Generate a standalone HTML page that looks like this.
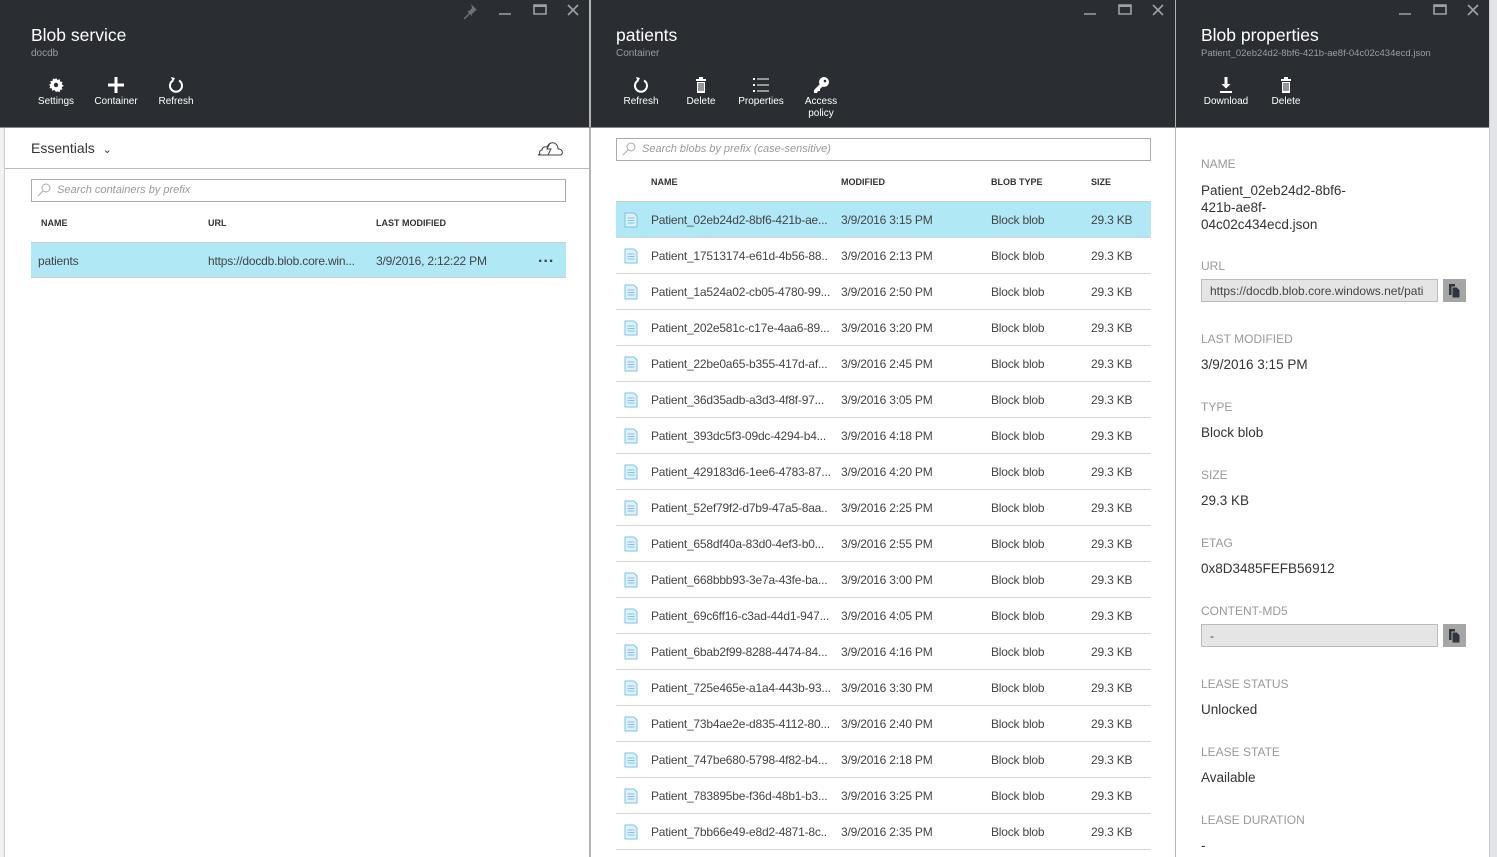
<!DOCTYPE html>
<html><head><meta charset="utf-8"><style>
*{margin:0;padding:0;box-sizing:border-box}
body{width:1497px;height:857px;overflow:hidden;background:#fff;font-family:"Liberation Sans",sans-serif;position:relative;color:#333}
.a{position:absolute}
.hdr{background:#2a2e33;height:127px;top:0}
.t{color:#fff;font-size:17.5px;top:25px}
.st{color:#9a9ea3;font-size:10px;top:48px}
.btn{color:#fff;font-size:10px;text-align:center;top:77px;width:60px;line-height:12px}
.btn svg{display:block;margin:0 auto 3px}
.th{font-size:9px;font-weight:bold;color:#333}
.row{height:36px;border-bottom:1px solid #d5d5d5;font-size:12px;color:#444;left:616px;width:535px}
.row span{position:absolute;top:11px;white-space:nowrap;letter-spacing:-0.2px}
.lbl{font-size:12px;color:#999;left:1201px}
.val{font-size:13.5px;color:#333;left:1201px}
</style></head><body>
<div class="a" style="left:0;top:127px;width:5px;height:730px;background:#f2f2f2;border-right:1px solid #ccc"></div>
<div class="a hdr" style="left:0;width:590px"></div>
<div class="a" style="left:589px;top:0;width:2px;height:857px;background:#b3b3b3"></div>
<div class="a hdr" style="left:591px;width:584px"></div>
<div class="a" style="left:1175px;top:0;width:1px;height:857px;background:#b3b3b3"></div>
<div class="a hdr" style="left:1176px;width:313px"></div>
<div class="a" style="left:1489px;top:0;width:8px;height:857px;background:#e3e3ea;border-left:1px solid #ccc"></div>
<div class="a" style="left:0;top:127px;width:1489px;height:1px;background:#888"></div>

<svg class="a" style="left:462px;top:3px" width="16" height="16"><path d="M9 1l6 6-2 1-3 3 0 2-2-2-5 5-1 0 0-1 5-5-2-2 2 0 3-3z" fill="#6d7278"/></svg>
<svg class="a" width="1497" height="20" style="left:0;top:0">
<g stroke="#9ea2a6" stroke-width="1.6" fill="none">
<path d="M499 14h12M534 5h12v9h-12zM568 5l10 10M578 5l-10 10"/>
<path d="M1084 14h12M1119 5h12v9h-12zM1153 5l10 10M1163 5l-10 10"/>
<path d="M1399 14h12M1434 5h12v9h-12zM1468 5l10 10M1478 5l-10 10"/>
</g><path d="M534 5h12v2h-12zM1119 5h12v2h-12zM1434 5h12v2h-12z" fill="#9ea2a6"/></svg>

<div class="a t" style="left:31px">Blob service</div>
<div class="a st" style="left:31px">docdb</div>
<div class="a btn" style="left:26px"><svg width="16" height="16" viewBox="0 0 16 16"><path d="M8 1l1.5 2 2.3-.8.3 2.4 2.4.3-.8 2.3 2 1.5-2 1.5.8 2.3-2.4.3-.3 2.4-2.3-.8L8 15l-1.5-2-2.3.8-.3-2.4-2.4-.3.8-2.3L1 8l2-1.5-.8-2.3 2.4-.3.3-2.4 2.3.8z" fill="#fff"/><circle cx="8" cy="8" r="2.2" fill="#2a2e33"/></svg>Settings</div>
<div class="a btn" style="left:86px"><svg width="16" height="16"><path d="M6.5 0h3v6.5H16v3H9.5V16h-3V9.5H0v-3h6.5z" fill="#fff"/></svg>Container</div>
<div class="a btn" style="left:146px"><svg width="16" height="16"><path d="M5 3.5A6 6 0 1 0 11 3.5" stroke="#fff" stroke-width="2" fill="none"/><path d="M3 0l4 1-2 4z" fill="#fff"/></svg>Refresh</div>

<div class="a" style="left:31px;top:140px;font-size:14px;color:#333">Essentials &nbsp;<span style="font-size:11px">&#8964;</span></div>
<svg class="a" style="left:535px;top:139px" width="28" height="18"><path d="M3 16h22c2 0 3-2 2-4-1-2-3-2-4-2 0-4-3-7-7-6-2 1-3 2-4 4-3-1-5 1-5 3-2 0-3 2-2 4z" stroke="#444" fill="none"/><path d="M15 4l-3 6h4l-3 6" stroke="#444" fill="none"/></svg>
<div class="a" style="left:5px;top:168px;width:584px;height:1px;background:#bbb"></div>
<div class="a" style="left:31px;top:179px;width:535px;height:23px;border:1px solid #aaa;font-size:11px;color:#999;font-style:italic;padding:4px 0 0 25px">Search containers by prefix</div>
<svg class="a" style="left:37px;top:183px" width="14" height="14"><circle cx="9" cy="5" r="4" stroke="#aaa" fill="none"/><path d="M6 8l-5 5" stroke="#aaa"/></svg>
<div class="a th" style="left:41px;top:218px">NAME</div>
<div class="a th" style="left:208px;top:218px">URL</div>
<div class="a th" style="left:376px;top:218px">LAST MODIFIED</div>
<div class="a" style="left:31px;top:242px;width:535px;height:36px;background:#b1e8f6;border-top:1px solid #ccc;border-bottom:1px solid #ccc;font-size:12px;color:#444;letter-spacing:-0.2px">
<span class="a" style="left:7px;top:11px">patients</span><span class="a" style="left:177px;top:11px">https://docdb.blob.core.win...</span><span class="a" style="left:345px;top:11px">3/9/2016, 2:12:22 PM</span><span class="a" style="left:507px;top:6px;font-size:16px;font-weight:bold;letter-spacing:1px">...</span></div>

<div class="a t" style="left:616px">patients</div>
<div class="a st" style="left:616px">Container</div>
<div class="a btn" style="left:611px"><svg width="16" height="16"><path d="M5 3.5A6 6 0 1 0 11 3.5" stroke="#fff" stroke-width="2" fill="none"/><path d="M3 0l4 1-2 4z" fill="#fff"/></svg>Refresh</div>
<div class="a btn" style="left:671px"><svg width="16" height="16"><path d="M3 2h10v2H3zM6 0h4v2H6zM4 5h8v11H4z" fill="#fff"/><path d="M6 6v8M8 6v8M10 6v8" stroke="#2a2e33"/></svg>Delete</div>
<div class="a btn" style="left:731px"><svg width="16" height="16"><path d="M0 1h2v2H0zM0 7h2v2H0zM0 13h2v2H0zM4 1.5h12v1H4zM4 7.5h12v1H4zM4 13.5h12v1H4z" fill="#fff"/></svg>Properties</div>
<div class="a btn" style="left:791px"><svg width="16" height="16"><circle cx="11" cy="5" r="5" fill="#fff"/><path d="M7 7L1 13v3h3l1-2h2v-2l3-3z" fill="#fff"/><circle cx="12" cy="4" r="1.3" fill="#2a2e33"/></svg>Access<br>policy</div>

<div class="a" style="left:616px;top:138px;width:535px;height:23px;border:1px solid #aaa;font-size:11px;color:#999;font-style:italic;padding:4px 0 0 25px">Search blobs by prefix (case-sensitive)</div>
<svg class="a" style="left:622px;top:142px" width="14" height="14"><circle cx="9" cy="5" r="4" stroke="#aaa" fill="none"/><path d="M6 8l-5 5" stroke="#aaa"/></svg>
<div class="a th" style="left:651px;top:177px">NAME</div>
<div class="a th" style="left:841px;top:177px">MODIFIED</div>
<div class="a th" style="left:991px;top:177px">BLOB TYPE</div>
<div class="a th" style="left:1091px;top:177px">SIZE</div>
<div class="a" style="left:616px;top:201px;width:535px;height:1px;background:#ccc"></div>
<div id="rows"></div>

<div class="a t" style="left:1201px">Blob properties</div>
<div class="a st" style="left:1201px;font-size:9.5px">Patient_02eb24d2-8bf6-421b-ae8f-04c02c434ecd.json</div>
<div class="a btn" style="left:1196px"><svg width="16" height="16"><path d="M6.5 0h3v7h3L8 11.5 3.5 7h3z" fill="#fff"/><path d="M2 14h12v2H2z" fill="#fff"/></svg>Download</div>
<div class="a btn" style="left:1256px"><svg width="16" height="16"><path d="M3 2h10v2H3zM6 0h4v2H6zM4 5h8v11H4z" fill="#fff"/><path d="M6 6v8M8 6v8M10 6v8" stroke="#2a2e33"/></svg>Delete</div>

<div class="a lbl" style="top:157px">NAME</div>
<div class="a val" style="top:182px;line-height:17px">Patient_02eb24d2-8bf6-<br>421b-ae8f-<br>04c02c434ecd.json</div>
<div class="a lbl" style="top:259px">URL</div>
<div class="a" style="left:1201px;top:279px;width:237px;height:23px;background:#e5e5e5;border:1px solid #bbb;font-size:12px;color:#444;padding:4px 0 0 8px;white-space:nowrap;overflow:hidden">https://docdb.blob.core.windows.net/pati</div>
<div class="a" style="left:1443px;top:279px;width:23px;height:23px;background:#a6a6a6"><svg width="23" height="23"><path d="M6 5h6v11H6z" fill="#2d3540"/><path d="M9 8h5l3 3v8H9z" fill="#2d3540" stroke="#a6a6a6"/></svg></div>
<div class="a lbl" style="top:332px">LAST MODIFIED</div>
<div class="a val" style="top:357px">3/9/2016 3:15 PM</div>
<div class="a lbl" style="top:400px">TYPE</div>
<div class="a val" style="top:425px">Block blob</div>
<div class="a lbl" style="top:468px">SIZE</div>
<div class="a val" style="top:493px">29.3 KB</div>
<div class="a lbl" style="top:536px">ETAG</div>
<div class="a val" style="top:561px">0x8D3485FEFB56912</div>
<div class="a lbl" style="top:604px">CONTENT-MD5</div>
<div class="a" style="left:1201px;top:624px;width:237px;height:23px;background:#e5e5e5;border:1px solid #bbb;font-size:12px;color:#444;padding:4px 0 0 8px">-</div>
<div class="a" style="left:1443px;top:624px;width:23px;height:23px;background:#a6a6a6"><svg width="23" height="23"><path d="M6 5h6v11H6z" fill="#2d3540"/><path d="M9 8h5l3 3v8H9z" fill="#2d3540" stroke="#a6a6a6"/></svg></div>
<div class="a lbl" style="top:677px">LEASE STATUS</div>
<div class="a val" style="top:702px">Unlocked</div>
<div class="a lbl" style="top:745px">LEASE STATE</div>
<div class="a val" style="top:770px">Available</div>
<div class="a lbl" style="top:813px">LEASE DURATION</div>
<div class="a val" style="top:838px">-</div>

<script>
var d=[["Patient_02eb24d2-8bf6-421b-ae...","3/9/2016 3:15 PM"],["Patient_17513174-e61d-4b56-88..","3/9/2016 2:13 PM"],["Patient_1a524a02-cb05-4780-99...","3/9/2016 2:50 PM"],["Patient_202e581c-c17e-4aa6-89...","3/9/2016 3:20 PM"],["Patient_22be0a65-b355-417d-af...","3/9/2016 2:45 PM"],["Patient_36d35adb-a3d3-4f8f-97...","3/9/2016 3:05 PM"],["Patient_393dc5f3-09dc-4294-b4...","3/9/2016 4:18 PM"],["Patient_429183d6-1ee6-4783-87...","3/9/2016 4:20 PM"],["Patient_52ef79f2-d7b9-47a5-8aa..","3/9/2016 2:25 PM"],["Patient_658df40a-83d0-4ef3-b0...","3/9/2016 2:55 PM"],["Patient_668bbb93-3e7a-43fe-ba...","3/9/2016 3:00 PM"],["Patient_69c6ff16-c3ad-44d1-947...","3/9/2016 4:05 PM"],["Patient_6bab2f99-8288-4474-84...","3/9/2016 4:16 PM"],["Patient_725e465e-a1a4-443b-93...","3/9/2016 3:30 PM"],["Patient_73b4ae2e-d835-4112-80...","3/9/2016 2:40 PM"],["Patient_747be680-5798-4f82-b4...","3/9/2016 2:18 PM"],["Patient_783895be-f36d-48b1-b3...","3/9/2016 3:25 PM"],["Patient_7bb66e49-e8d2-4871-8c..","3/9/2016 2:35 PM"]];
var h="";
var ic='<svg style="position:absolute;left:8px;top:10px" width="14" height="16"><path d="M1 1h9l3 3v11H1z" fill="#dff1fa" stroke="#7cc3e3"/><path d="M3.5 6h7M3.5 8.5h7M3.5 11h7" stroke="#7cc3e3"/></svg>';
d.forEach(function(r,i){h+='<div class="a row" style="top:'+(202+i*36)+'px;'+(i==0?'background:#b1e8f6;':'')+'">'+ic+'<span style="left:35px">'+r[0]+'</span><span style="left:225px">'+r[1]+'</span><span style="left:375px">Block blob</span><span style="left:475px">29.3 KB</span></div>';});
document.getElementById("rows").innerHTML=h;
</script>
</body></html>
